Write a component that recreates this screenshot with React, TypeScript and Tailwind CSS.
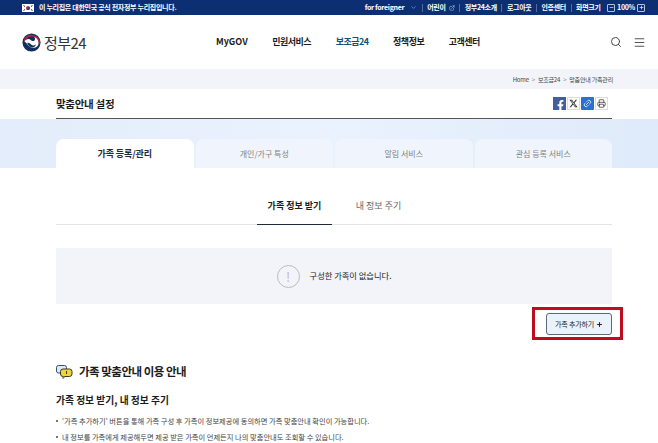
import { ChevronDown, ExternalLink, Menu, Minus, Plus, Printer, Search, Link2 } from 'lucide-react';
import { FaFacebookF } from 'react-icons/fa';

const FONT = "font-['Noto_Sans_CJK_KR','Noto_Sans',sans-serif]";

const UTIL_LINKS = ['정부24소개', '로그아웃', '인증센터'];
const NAV_ITEMS = ['민원서비스', '보조금24', '정책정보', '고객센터'];
const TABS = ['가족 등록/관리', '개인/가구 특성', '알림 서비스', '관심 등록 서비스'];

function Divider() {
  return <span className="h-[8px] w-px bg-white/30" />;
}

function UtilBar() {
  return (
    <div className="flex h-[15px] items-center justify-between bg-[#0c2f74] pr-[13px] pl-[22px] text-[7px] font-bold tracking-[-0.3px] text-white">
      <div className="flex items-center gap-[5px]">
        <svg width="12" height="8" viewBox="0 0 12 8">
          <rect width="12" height="8" fill="#fff" />
          <circle cx="6" cy="4" r="2" fill="#c9304a" />
          <path d="M4 4a1 1 0 0 0 2 0a1 1 0 0 1 2 0a2 2 0 0 1-4 0z" fill="#1d3f87" />
          <path d="M1.5 1.5l1.5 1M1.5 6.5l1.5-1M10.5 1.5l-1.5 1M10.5 6.5l-1.5-1" stroke="#222" strokeWidth="1" />
        </svg>
        <span>이 누리집은 대한민국 공식 전자정부 누리집입니다.</span>
      </div>
      <div className="flex items-center gap-[4.5px]">
        <span className="flex items-center gap-[6px]">
          for foreigner <ChevronDown size={7} strokeWidth={1.5} className="text-white/80" />
        </span>
        <Divider />
        <span className="flex items-center gap-[3px]">
          어린이 <ExternalLink size={6} strokeWidth={1.5} />
        </span>
        <Divider />
        {UTIL_LINKS.map((label) => (
          <span key={label} className="flex items-center gap-[4.5px]">
            {label}
            <Divider />
          </span>
        ))}
        <span className="mr-[2px]">화면크기</span>
        <span className="flex items-center gap-[2px]">
          <span className="flex size-[8px] items-center justify-center rounded-[1px] border border-white/70">
            <Minus size={5} strokeWidth={3} />
          </span>
          100%
          <span className="flex size-[8px] items-center justify-center rounded-[1px] border border-white/70">
            <Plus size={5} strokeWidth={3} />
          </span>
        </span>
      </div>
    </div>
  );
}

function Logo() {
  return (
    <div className="flex items-center gap-[3px]">
      <svg width="19" height="19" viewBox="0 0 20 20">
        <circle cx="10" cy="10" r="9.5" fill="#12305f" />
        {/* white swirl running from the left edge round to the right */}
        <path d="M2.5 9C4 6 7.5 5.5 9.5 7.5C11 9 13 8.8 13.6 7C14 5.8 13.5 4.8 12.5 4.2C15.5 4.6 17.5 7 17.5 10C17.5 11 17.3 12 17 12.5C16 14.5 14 15.5 11 15.5C7 15.5 5 10 2.5 9z" fill="#fff" />
        <path d="M5.5 10.5C7 10 8.5 11 9.5 12.2C10.5 13.4 13 13.6 14.5 11.5C14.5 14 12.5 15.2 10.5 15.2C8.2 15.2 6.5 13 5.5 10.5z" fill="#12305f" />
        {/* thin red arc over the top right */}
        <path d="M2.2 6.2A9.4 9.4 0 0 1 19.4 10.5L17.6 12C18.2 7.5 15 3.9 11.3 3.7C7.5 3.5 4.5 5.5 2.2 9z" fill="#b3263f" />
      </svg>
      <span className="text-[15px] leading-none tracking-[-0.6px] text-[#333]">정부24</span>
    </div>
  );
}

function Header() {
  return (
    <header className="flex h-[54px] items-center justify-between bg-white pr-[12px] pl-[22px]">
      <Logo />
      <nav className="flex items-center gap-[24.5px] text-[9px] font-bold tracking-[-0.5px] text-[#1c1c1c]">
        <span className="tracking-normal">MyGOV</span>
        {NAV_ITEMS.map((item) => (
          <span key={item} className={item === '보조금24' ? 'text-[#12517f]' : ''}>
            {item}
          </span>
        ))}
      </nav>
      <div className="flex items-center gap-[11px] text-[#333]">
        <Search size={12} strokeWidth={1.8} />
        <Menu size={13} strokeWidth={2} className="text-[#555]" />
      </div>
    </header>
  );
}

function Breadcrumb() {
  return (
    <div className="flex h-[20px] items-center justify-end gap-[3px] bg-[#f3f4f9] pr-[45px] text-[6px] tracking-[-0.2px] text-[#444]">
      <span>Home</span>
      <span className="text-[#888]">&gt;</span>
      <span>보조금24</span>
      <span className="text-[#888]">&gt;</span>
      <span>맞춤안내 가족관리</span>
    </div>
  );
}

function ShareButtons() {
  return (
    <div className="flex items-center gap-[1px] pr-[4px]">
      <span className="flex size-[13px] items-end justify-end overflow-hidden bg-[#3f5f9f] text-white">
        <FaFacebookF size={11} className="-mb-[1px]" />
      </span>
      <span className="flex size-[13px] items-center justify-center border border-[#ddd] bg-white text-[#222]">
        <svg width="9" height="9" viewBox="0 0 24 24" fill="currentColor">
          <path d="M18.2 2.3h3.3l-7.2 8.2 8.5 11.2h-6.7l-5.2-6.8-6 6.8H1.6l7.7-8.8L1.2 2.3H8l4.7 6.2zM17 19.8h1.8L7 4.1H5z" />
        </svg>
      </span>
      <span className="flex size-[13px] items-center justify-center rounded-[1px] bg-[#2b6fd0] text-white">
        <Link2 size={9} strokeWidth={2} className="-rotate-45" />
      </span>
      <span className="flex size-[13px] items-center justify-center border border-[#ddd] bg-white text-[#222]">
        <Printer size={9} strokeWidth={1.8} />
      </span>
    </div>
  );
}

function TabBand() {
  return (
    <div className="flex h-[49px] items-end bg-gradient-to-r from-[#e3edfb] via-[#eaf2fd] to-[#dfeafa] pl-[56px]">
      <div className="flex w-[556px] gap-[2px]">
        {TABS.map((tab, i) => (
          <div
            key={tab}
            className={`flex h-[29px] flex-1 items-center justify-center rounded-t-[8px] ${
              i === 0
                ? 'bg-white text-[9px] font-bold tracking-[-0.1px] text-[#1d2a3a]'
                : 'bg-[#f0f5fd] text-[8px] text-[#808080]'
            }`}
          >
            {tab}
          </div>
        ))}
      </div>
    </div>
  );
}

function BulletItem({ children }: { children: React.ReactNode }) {
  return (
    <li className="flex items-center gap-[4px] text-[7.25px] text-[#444]">
      <span className="size-[2px] rounded-full bg-[#444]" />
      {children}
    </li>
  );
}

export default function App() {
  return (
    <div className={`h-[443px] w-[658px] overflow-hidden bg-white ${FONT}`}>
      <UtilBar />
      <Header />
      <Breadcrumb />

      <div className="ml-[56px] flex h-[30px] w-[556px] items-center justify-between border-b border-[#555]">
        <h1 className="text-[10.5px] font-bold tracking-[-0.3px] text-[#1c1c1c]">맞춤안내 설정</h1>
        <ShareButtons />
      </div>

      <TabBand />

      <main className="ml-[56px] w-[556px]">
        <div className="mt-[27px] flex h-[30px] items-start gap-[9px] border-b border-[#e4e4e4] pl-[201px] text-[9px]">
          <span className="-mb-px h-[30px] w-[75px] border-b border-[#1d2a3a] pt-[4px] text-center font-bold whitespace-nowrap text-[#1c1c1c]">
            가족 정보 받기
          </span>
          <span className="w-[75px] pt-[4px] text-center text-[#666]">내 정보 주기</span>
        </div>

        <div className="mt-[23px] flex h-[56px] items-center justify-center gap-[10px] bg-[#f3f4f9]">
          <span className="flex size-[23px] items-center justify-center rounded-full border border-[#bbb] text-[13px] leading-none text-[#bbb]">
            !
          </span>
          <span className="mb-[1px] text-[8.25px] text-[#222]">구성한 가족이 없습니다.</span>
        </div>

        {/* Red frame is part of the picture: an annotation around the button. */}
        <div className="mt-[3px] flex justify-end">
          <div className="mr-[-11px] border-[3px] border-[#c00d1e] pt-[3px] pr-[8px] pb-[2px] pl-[11px]">
            <button className="flex h-[22px] w-[66px] items-center justify-center gap-[2px] rounded-[3px] border border-[#5b6b7d] bg-[#eaf2fc] text-[7px] tracking-[-0.2px] text-[#222]">
              가족 추가하기 <Plus size={7} strokeWidth={3.5} />
            </button>
          </div>
        </div>

        <div className="mt-[23px] flex items-center gap-[6px]">
          <svg width="17" height="14" viewBox="0 0 17 14">
            <rect x="0.5" y="0.5" width="10" height="7.5" rx="2" fill="#dfe8f5" stroke="#33506e" />
            <rect x="4.5" y="4" width="11.5" height="7.5" rx="2.5" fill="#f5d13c" stroke="#33401a" />
            <path d="M7 11.5v2l2-2" fill="#f5d13c" stroke="#33401a" strokeWidth="0.8" />
            <rect x="10" y="6" width="1" height="3" fill="#33401a" />
          </svg>
          <h2 className="text-[11.5px] font-bold tracking-[-0.5px] text-[#1c1c1c]">가족 맞춤안내 이용 안내</h2>
        </div>

        <h3 className="mt-[13px] text-[9.75px] font-bold text-[#1c1c1c]">가족 정보 받기, 내 정보 주기</h3>

        <ul className="mt-[8px] flex flex-col gap-[5px]">
          <BulletItem>'가족 추가하기' 버튼을 통해 가족 구성 후 가족이 정보제공에 동의하면 가족 맞춤안내 확인이 가능합니다.</BulletItem>
          <BulletItem>내 정보를 가족에게 제공해두면 제공 받은 가족이 언제든지 나의 맞춤안내도 조회할 수 있습니다.</BulletItem>
        </ul>
      </main>
    </div>
  );
}
